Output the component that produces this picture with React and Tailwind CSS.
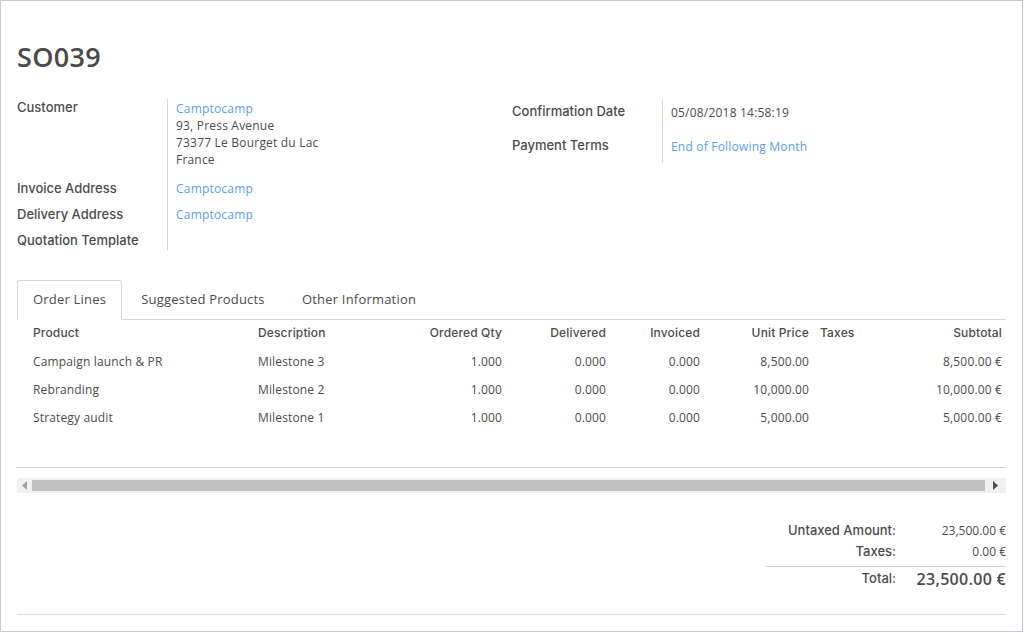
export default function App() {
  const rows = [
    ["Campaign launch & PR", "Milestone 3", "1.000", "0.000", "0.000", "8,500.00", "", "8,500.00 €"],
    ["Rebranding", "Milestone 2", "1.000", "0.000", "0.000", "10,000.00", "", "10,000.00 €"],
    ["Strategy audit", "Milestone 1", "1.000", "0.000", "0.000", "5,000.00", "", "5,000.00 €"],
  ];
  const grid = "grid grid-cols-[237px_146px_106px_104px_94px_109px_87px_106px]";
  const lbl = "font-['Inter',sans-serif] font-medium";
  return (
    <div className="w-[1023px] h-[632px] border border-[#c9c8d8] bg-white text-[#4c4c4c] overflow-hidden font-['Open_Sans','Noto_Sans',sans-serif]">
      <div className="pl-4 pr-[16px]">
        <h1 className="text-[27px] font-semibold leading-none pt-[42px] h-[98px] text-[#4a4a4a] tracking-[0.3px]">SO039</h1>
        <div className="flex">
          {/* left group */}
          <div className="w-[495px] flex">
            <div className={`w-[150px] text-[13px] text-[#4c4c4c] ${lbl}`}>
              <div className="h-[81px] leading-[17px]">Customer</div>
              <div className="h-[26px] leading-[17px]">Invoice Address</div>
              <div className="h-[26px] leading-[17px]">Delivery Address</div>
              <div className="h-[26px] leading-[17px]">Quotation Template</div>
            </div>
            <div className="border-l border-[#d8d8d8] pl-2 text-[12px] leading-[17px] h-[151px] pt-[1px] tracking-[0.2px]">
              <div className="h-[80px]">
                <div className="text-[#5a9ef0]">Camptocamp</div>
                <div>93, Press Avenue</div>
                <div>73377 Le Bourget du Lac</div>
                <div>France</div>
              </div>
              <div className="h-[26px] text-[#5a9ef0]">Camptocamp</div>
              <div className="h-[26px] text-[#5a9ef0]">Camptocamp</div>
            </div>
          </div>
          {/* right group */}
          <div className="flex">
            <div className={`w-[150px] text-[13px] pt-[4px] leading-[17px] ${lbl}`}>
              <div className="h-[34px]">Confirmation Date</div>
              <div className="h-[26px]">Payment Terms</div>
            </div>
            <div className="border-l border-[#d8d8d8] pl-2 text-[12px] leading-[17px] h-[64px] pt-[5px] tracking-[0.2px]">
              <div className="h-[34px]">05/08/2018 14:58:19</div>
              <div className="text-[#5a9ef0]">End of Following Month</div>
            </div>
          </div>
        </div>

        {/* tabs */}
        <div className="mt-[22px] flex h-[40px] border-b border-[#d8d8d8] text-[13px] tracking-[0.2px]">
          <div className="w-[105px] border border-[#d8d8d8] border-b-white rounded-t-[3px] -mb-px flex items-center justify-center bg-white">Order Lines</div>
          <div className="w-[164px] flex items-center justify-center pr-[2px]">Suggested Products</div>
          <div className="w-[146px] flex items-center justify-center">Other Information</div>
        </div>

        {/* table */}
        <div className="text-[12px] tracking-[0.15px]">
          <div className={`${grid} h-[25px] items-center ${lbl}`}>
            <div className="pl-4">Product</div>
            <div className="pl-1">Description</div>
            <div className="text-right pr-1">Ordered Qty</div>
            <div className="text-right pr-1">Delivered</div>
            <div className="text-right pr-1">Invoiced</div>
            <div className="text-right pr-1">Unit Price</div>
            <div className="pl-[7px]">Taxes</div>
            <div className="text-right pr-1">Subtotal</div>
          </div>
          <div className="pt-[3px]">
            {rows.map((r, i) => (
              <div key={i} className={`${grid} h-[28px] items-center`}>
                <div className="pl-4">{r[0]}</div>
                <div className="pl-1">{r[1]}</div>
                <div className="text-right pr-1">{r[2]}</div>
                <div className="text-right pr-1">{r[3]}</div>
                <div className="text-right pr-1">{r[4]}</div>
                <div className="text-right pr-1">{r[5]}</div>
                <div className="pl-[7px]">{r[6]}</div>
                <div className="text-right pr-1">{r[7]}</div>
              </div>
            ))}
          </div>
        </div>
        <div className="mt-[35px] border-t border-[#cfcfcf]"></div>

        {/* scrollbar */}
        <div className="mt-[10px] h-[15px] bg-[#f1f1f1] flex items-center">
          <div className="w-[15px] flex justify-center">
            <svg width="5" height="9" viewBox="0 0 5 9"><path d="M5 0 L0 4.5 L5 9 Z" fill="#a3a3a3" /></svg>
          </div>
          <div className="flex-1 h-[11px] bg-[#c1c1c1]"></div>
          <div className="w-[21px] flex justify-center">
            <svg width="5" height="9" viewBox="0 0 5 9"><path d="M0 0 L5 4.5 L0 9 Z" fill="#505050" /></svg>
          </div>
        </div>

        {/* totals */}
        <div className="mt-[27px] flex justify-end">
          <div className="w-[240px]">
            <div className="flex h-[21px] items-center">
              <div className={`flex-1 text-right text-[13px] ${lbl}`}>Untaxed Amount:</div>
              <div className="w-[110px] text-right text-[12px]">23,500.00 €</div>
            </div>
            <div className="flex h-[21px] items-center">
              <div className={`flex-1 text-right text-[13px] ${lbl}`}>Taxes:</div>
              <div className="w-[110px] text-right text-[12px]">0.00 €</div>
            </div>
            <div className="mt-[4px] border-t border-[#cfcfcf] flex h-[24px] items-center">
              <div className={`flex-1 text-right text-[13px] ${lbl}`}>Total:</div>
              <div className="w-[110px] text-right text-[16px] font-semibold whitespace-nowrap tracking-[0.3px]">23,500.00 €</div>
            </div>
          </div>
        </div>
        <div className="mt-[24px] border-t border-[#dcdcdc]"></div>
      </div>
    </div>
  );
}
